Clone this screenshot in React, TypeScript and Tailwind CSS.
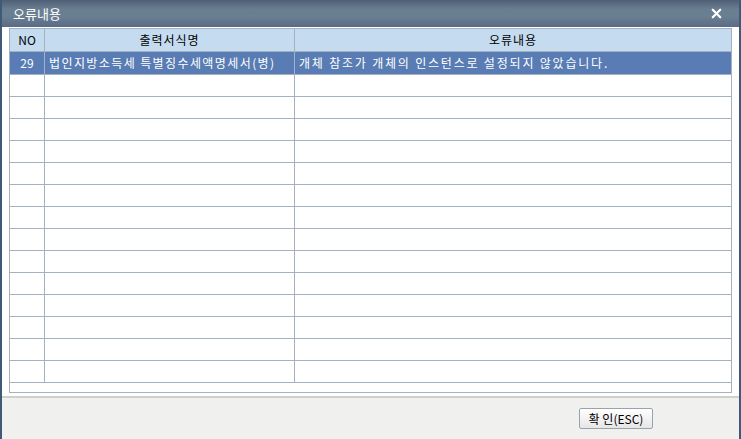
import { X } from 'lucide-react';

const FONT = "font-['Noto_Sans_CJK_KR','Noto_Sans',sans-serif]";

const EMPTY_ROWS = Array.from({ length: 14 }, (_, i) => i);

export default function App() {
  return (
    <div className={`flex h-[439px] w-[741px] flex-col bg-[#3f5a77] px-[2px] ${FONT}`}>
      <div className="flex h-[27px] shrink-0 items-center justify-between bg-[linear-gradient(to_bottom,#4f5f76_0%,#6a7e92_35%,#6b7f93_60%,#5b6b84_100%)] pl-[11px] pr-[15px]">
        <span className="text-[13px] leading-none text-white">오류내용</span>
        <X className="h-[15px] w-[15px] text-white" strokeWidth={3.5} />
      </div>
      <div className="flex flex-1 flex-col bg-white px-[7px] pt-[1px]">
        <div className="flex h-[365px] flex-col border border-[#a3b1c1] text-[12px] leading-none">
          <div className="flex h-[23px] shrink-0 border-b border-[#a3b1c1] bg-[#c5dbf0] text-black">
            <div className="flex w-[35px] items-center justify-center border-r border-[#a3b1c1]">NO</div>
            <div className="flex w-[250px] items-center justify-center border-r border-[#a3b1c1] tracking-[1px]">출력서식명</div>
            <div className="flex flex-1 items-center justify-center tracking-[1px]">오류내용</div>
          </div>
          <div className="flex h-[22px] shrink-0 bg-[#587cb3] text-white">
            <div className="flex w-[35px] items-center justify-center border-r border-[#a3b1c1]">29</div>
            <div className="flex w-[250px] items-center border-r border-[#a3b1c1] pl-[4px] tracking-[1.4px]">법인지방소득세 특별징수세액명세서(병)</div>
            <div className="flex flex-1 items-center pl-[4px] tracking-[1.8px]">개체 참조가 개체의 인스턴스로 설정되지 않았습니다.</div>
          </div>
          {EMPTY_ROWS.map((r) => (
            <div key={r} className="flex h-[22px] shrink-0 border-t border-[#a3b1c1]">
              <div className="w-[35px] border-r border-[#a3b1c1]" />
              <div className="w-[250px] border-r border-[#a3b1c1]" />
              <div className="flex-1" />
            </div>
          ))}
          <div className="flex-1 border-t border-[#a3b1c1]" />
        </div>
        <div className="flex-1" />
      </div>
      <div className="flex h-[43px] shrink-0 justify-end border-t-2 border-[#cfcfcc] bg-[#f0f0ee] pr-[86px] pt-[10px]">
        <button className="flex h-[21px] w-[74px] items-center justify-center rounded-[2px] border border-[#9aa3ad] bg-[linear-gradient(to_bottom,#ffffff,#e6e6e6)] text-[12px] leading-none text-black">
          확 인(ESC)
        </button>
      </div>
    </div>
  );
}
